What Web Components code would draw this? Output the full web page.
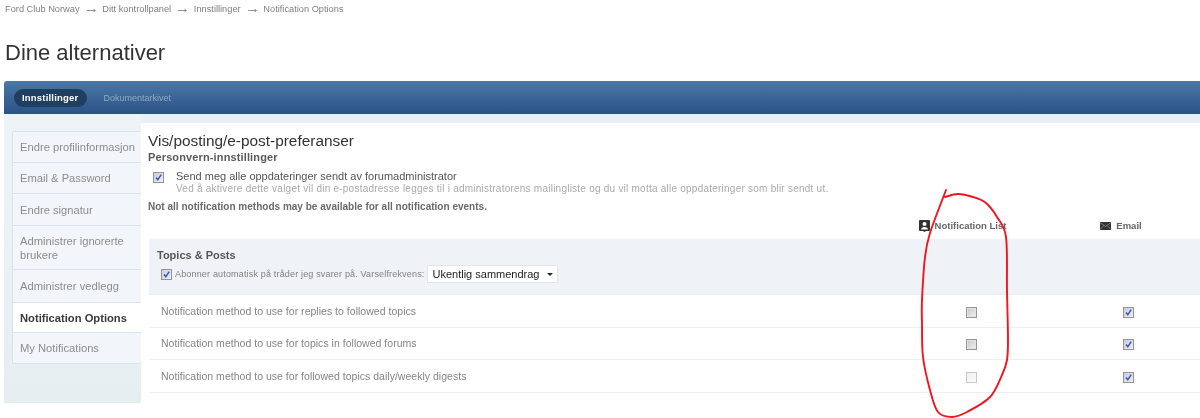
<!DOCTYPE html>
<html lang="no">
<head>
<meta charset="utf-8">
<title>Dine alternativer</title>
<style>
    html, body { margin: 0; padding: 0; background: #fff; }
    /* the reference is a resampled screenshot, so everything is slightly soft */
    body { width: 1200px; height: 418px; overflow: hidden; position: relative; font-family: "Liberation Sans", Arial, sans-serif; color: #555; filter: blur(.35px); }
</style>
</head>
<body>
<forum-breadcrumb>
    <span>Ford Club Norway</span>
    <span>Ditt kontrollpanel</span>
    <span>Innstillinger</span>
    <span>Notification Options</span>
</forum-breadcrumb>
<page-title>Dine alternativer</page-title>
<settings-panel>
    <tab-bar slot="tabs">
        <tab-pill active>Innstillinger</tab-pill>
        <tab-pill>Dokumentarkivet</tab-pill>
    </tab-bar>
    <side-nav slot="nav">
        <side-item h="31">Endre profilinformasjon</side-item>
        <side-item h="31">Email &amp; Password</side-item>
        <side-item h="32">Endre signatur</side-item>
        <side-item h="44">Administrer ignorerte brukere</side-item>
        <side-item h="33">Administrer vedlegg</side-item>
        <side-item h="30" active>Notification Options</side-item>
        <side-item h="31">My Notifications</side-item>
    </side-nav>
    <prefs-form>
        <notify-table>
            <notify-group slot="group"></notify-group>
            <notify-row>Notification method to use for replies to followed topics</notify-row>
            <notify-row>Notification method to use for topics in followed forums</notify-row>
            <notify-row faded>Notification method to use for followed topics daily/weekly digests</notify-row>
        </notify-table>
    </prefs-form>
</settings-panel>
<red-scribble></red-scribble>

<script>
class ForumBreadcrumb extends HTMLElement {
    constructor() {
        super();
        this.attachShadow({ mode: 'open' });
    }

    connectedCallback() {
        this.shadowRoot.innerHTML = `
            <style>
                :host { display: block; height: 19px; padding-left: 5px; font-size: 9.25px; line-height: 19px; color: #808080; }
                nav { display: flex; align-items: center; }
                svg { display: block; flex: none; width: 9px; height: 5px; margin: 1px 6.700px 0 7px; }
                ::slotted(span) { white-space: nowrap; }
            </style>
            <nav></nav>
        `;
        const nav = this.shadowRoot.querySelector('nav');
        [...this.children].forEach((crumb, i) => {
            crumb.slot = 'c' + i;
            if (i > 0) {
                nav.insertAdjacentHTML('beforeend', '<svg viewBox="0 0 9 5"><path d="M0 2.5h8M6.500 1.200l2 1.300-2 1.300" fill="none" stroke="#777" stroke-width=".8"/></svg>');
            }
            nav.insertAdjacentHTML('beforeend', `<slot name="c${i}"></slot>`);
        });
    }
}

class PageTitle extends HTMLElement {
    constructor() {
        super();
        this.attachShadow({ mode: 'open' });
        this.shadowRoot.innerHTML = `
            <style>
                :host { display: block; height: 62px; padding: 22px 0 0 5px; box-sizing: border-box; font-size: 22px; line-height: 24px; color: #333; }
            </style>
            <slot></slot>
        `;
    }
}

class SettingsPanel extends HTMLElement {
    constructor() {
        super();
        this.attachShadow({ mode: 'open' });
        this.shadowRoot.innerHTML = `
            <style>
                :host { display: block; margin-left: 4px; }
                .body { display: flex; align-items: flex-start; background: linear-gradient(#e9f0f5 0, #e9f0f5 9px, #fff 9px); }
                .side { box-sizing: border-box; width: 137px; height: 289px; padding: 18px 0 0 8px; background: linear-gradient(#eef3f7, #e7eef2); flex: none; }
                .main { flex: 1; min-width: 0; padding-top: 9px; }
            </style>
            <slot name="tabs"></slot>
            <div class="body">
                <div class="side"><slot name="nav"></slot></div>
                <div class="main"><slot></slot></div>
            </div>
        `;
    }
}

class TabBar extends HTMLElement {
    constructor() {
        super();
        this.attachShadow({ mode: 'open' });
        this.shadowRoot.innerHTML = `
            <style>
                :host { display: flex; align-items: center; gap: 16px; box-sizing: border-box; height: 33px; padding-left: 10px; border-radius: 3px 0 0 0; background: linear-gradient(#4b78a6, #2b5287); }
            </style>
            <slot></slot>
        `;
    }
}

class TabPill extends HTMLElement {
    constructor() {
        super();
        this.attachShadow({ mode: 'open' });
        this.shadowRoot.innerHTML = `
            <style>
                :host { display: block; font-size: 9px; line-height: 18px; color: #8fa8c4; }
                :host([active]) { padding: 0 9px 0 8px; border-radius: 9px; background: #1f3f60; color: #fff; font-weight: bold; font-size: 9.5px; letter-spacing: .2px; }
            </style>
            <slot></slot>
        `;
    }
}

class SideNav extends HTMLElement {
    constructor() {
        super();
        this.attachShadow({ mode: 'open' });
        this.shadowRoot.innerHTML = `
            <style>
                :host { display: block; border-left: 1px solid #d8e3ef; }
            </style>
            <slot></slot>
        `;
    }
}

class SideItem extends HTMLElement {
    constructor() {
        super();
        this.attachShadow({ mode: 'open' });
        this.shadowRoot.innerHTML = `
            <style>
                :host { display: flex; align-items: center; box-sizing: border-box; padding: 0 0 0 7px; font-size: 11.2px; line-height: 14px; color: #8c8c8c; background: #f2f6fa; border-bottom: 1px solid #d8e3ef; }
                :host(:first-child) { box-shadow: 0 -1px 0 #d8e3ef; }
                :host([active]) { background: #fff; color: #3a3a3a; font-weight: bold; }
                div { max-width: 116px; }
            </style>
            <div><slot></slot></div>
        `;
    }

    connectedCallback() {
        this.style.height = this.getAttribute('h') + 'px';
    }
}

class TickBox extends HTMLElement {
    constructor() {
        super();
        this.attachShadow({ mode: 'open' });
        this.shadowRoot.innerHTML = `
            <style>
                :host { display: inline-block; box-sizing: border-box; flex: none; width: 11px; height: 11px; border: 1px solid #959595; background: linear-gradient(135deg, #c4c4c4, #f4f4f4); box-shadow: inset 0 0 0 1px #e4e4e4; }
                :host([faded]) { border-color: #c8c8c8; background: linear-gradient(135deg, #efefef, #fbfbfb); box-shadow: none; }
                svg { display: none; width: 9px; height: 9px; }
                :host([checked]) { background: linear-gradient(135deg, #c6cde3, #eef0f6); box-shadow: none; }
                :host([checked]) svg { display: block; }
            </style>
            <svg viewBox="0 0 9 9"><path d="M2 4.500l1.800 2.300L7.200 1.600" fill="none" stroke="#3d55a5" stroke-width="1.500"/></svg>
        `;
    }
}

class PrefsForm extends HTMLElement {
    constructor() {
        super();
        this.attachShadow({ mode: 'open' });
        this.shadowRoot.innerHTML = `
            <style>
                :host { display: block; padding: 9px 0 0 7px; }
                h2 { margin: 0; font-size: 15.400px; font-weight: normal; line-height: 18px; color: #333; }
                h3 { margin: 0; font-size: 11px; line-height: 14px; font-weight: bold; color: #5a5a5a; letter-spacing: .13px; }
                .opt { display: flex; gap: 12px; margin: 6px 0 0 5px; }
                .opt tick-box { margin-top: 2px; }
                .label { font-size: 11px; line-height: 12px; color: #555; }
                .hint { font-size: 10px; line-height: 13px; color: #aaa; letter-spacing: .235px; }
                .note { margin-top: 5px; font-size: 10px; line-height: 13px; font-weight: bold; color: #6a6a6a; letter-spacing: .015px; }
            </style>
            <h2>Vis/posting/e-post-preferanser</h2>
            <h3>Personvern-innstillinger</h3>
            <div class="opt">
                <tick-box checked></tick-box>
                <div>
                    <div class="label">Send meg alle oppdateringer sendt av forumadministrator</div>
                    <div class="hint">Ved å aktivere dette valget vil din e-postadresse legges til i administratorens mailingliste og du vil motta alle oppdateringer som blir sendt ut.</div>
                </div>
            </div>
            <div class="note">Not all notification methods may be available for all notification events.</div>
            <slot></slot>
        `;
    }
}

class NotifyTable extends HTMLElement {
    constructor() {
        super();
        this.attachShadow({ mode: 'open' });
        this.shadowRoot.innerHTML = `
            <style>
                :host { display: block; }
                .heads { display: grid; grid-template-columns: 1fr 159px 158px; box-sizing: border-box; height: 26px; padding-bottom: 1px; align-items: center; font-size: 9.500px; font-weight: bold; color: #666; }
                .heads div { display: flex; align-items: center; justify-content: center; gap: 5px; }
                svg { display: block; flex: none; }
            </style>
            <div class="heads">
                <span></span>
                <div>
                    <svg width="11" height="12" viewBox="0 0 11 12"><path d="M1 0h9a1 1 0 0 1 1 1v9a1 1 0 0 1-1 1H7L5.500 12 4 11H1a1 1 0 0 1-1-1V1a1 1 0 0 1 1-1z" fill="#333"/><circle cx="5.500" cy="4" r="2" fill="#fff"/><path d="M2 9.500c.5-2 2-2.600 3.500-2.600S8.500 7.500 9 9.500z" fill="#fff"/></svg>
                    <span>Notification List</span>
                </div>
                <div>
                    <svg width="11" height="8" viewBox="0 0 11 8"><rect width="11" height="8" fill="#333"/><path d="M0 .5l5.500 4 5.500-4M0 7.500l4-4M11 7.500l-4-4" fill="none" stroke="#999" stroke-width=".7"/></svg>
                    <span>Email</span>
                </div>
            </div>
            <slot name="group"></slot>
            <slot></slot>
        `;
    }
}

class NotifyGroup extends HTMLElement {
    constructor() {
        super();
        this.attachShadow({ mode: 'open' });
        this.shadowRoot.innerHTML = `
            <style>
                :host { display: block; box-sizing: border-box; height: 56px; margin-left: 1px; padding: 10px 0 0 8px; background: #eff3f7; border-bottom: 1px solid #e8eef2; }
                h4 { margin: 0; font-size: 11px; line-height: 13px; font-weight: bold; color: #555; }
                .line { display: flex; align-items: center; margin: 3px 0 0 4px; font-size: 9px; letter-spacing: .17px; color: #808080; }
                tick-box { margin-right: 3px; }
                .select { display: flex; align-items: center; justify-content: space-between; box-sizing: border-box; width: 131px; height: 18px; margin-left: 3px; padding: 0 4px 0 4px; background: #fff; border: 1px solid #dfe5ea; font-size: 11px; letter-spacing: 0; color: #222; white-space: nowrap; }
                .select i { width: 0; height: 0; border: 3px solid transparent; border-top: 3px solid #222; border-bottom: 0; }
            </style>
            <h4>Topics &amp; Posts</h4>
            <div class="line">
                <tick-box checked></tick-box>
                <span>Abonner automatisk på tråder jeg svarer på. Varselfrekvens:</span>
                <div class="select"><span>Ukentlig sammendrag</span><i></i></div>
            </div>
        `;
    }
}

class NotifyRow extends HTMLElement {
    constructor() {
        super();
        this.attachShadow({ mode: 'open' });
        this.shadowRoot.innerHTML = `
            <style>
                :host { display: grid; grid-template-columns: 1fr 172px 143px; align-items: center; box-sizing: border-box; height: 32.500px; margin-left: 1px; padding-left: 12px; border-bottom: 1px solid #edf0f3; font-size: 10.500px; letter-spacing: .02px; color: #858585; }
                .cell { display: flex; justify-content: center; padding-top: 3px; }
            </style>
            <div><slot></slot></div>
            <div class="cell a"><tick-box></tick-box></div>
            <div class="cell b"><tick-box checked></tick-box></div>
        `;
    }

    connectedCallback() {
        if (this.hasAttribute('faded')) {
            this.shadowRoot.querySelector('.a tick-box').setAttribute('faded', '');
        }
    }
}

// hand drawn ring round the Notification List column, points read off the screenshot
const RING = [[946,190],[930,233],[925,257],[922,300],[922,323],[923,357],[930,390],[938,412],[952,417],[967,412],[990,397],[1002,375],[1007,360],[1008,340],[1007,290],[1006,237],[997,217],[986,203],[973,197],[958,194],[945,197]];

class RedScribble extends HTMLElement {
    constructor() {
        super();
        this.attachShadow({ mode: 'open' });
        let d = `M${RING[0]}`;
        for (let i = 0; i < RING.length - 1; i++) {
            const p0 = RING[i - 1] || RING[i], p1 = RING[i], p2 = RING[i + 1], p3 = RING[i + 2] || p2;
            const c1 = [p1[0] + (p2[0] - p0[0]) / 6, p1[1] + (p2[1] - p0[1]) / 6];
            const c2 = [p2[0] - (p3[0] - p1[0]) / 6, p2[1] - (p3[1] - p1[1]) / 6];
            d += `C${c1} ${c2} ${p2}`;
        }
        this.shadowRoot.innerHTML = `
            <style>
                :host { display: block; position: absolute; left: 0; top: 0; width: 1200px; height: 418px; pointer-events: none; }
                svg { display: block; }
            </style>
            <svg width="1200" height="418" viewBox="0 0 1200 418">
                <path d="${d}" fill="none" stroke="#f4141e" stroke-width="1.900" stroke-linejoin="round" stroke-linecap="round"/>
            </svg>
        `;
    }
}

customElements.define('forum-breadcrumb', ForumBreadcrumb);
customElements.define('page-title', PageTitle);
customElements.define('settings-panel', SettingsPanel);
customElements.define('tab-bar', TabBar);
customElements.define('tab-pill', TabPill);
customElements.define('side-nav', SideNav);
customElements.define('side-item', SideItem);
customElements.define('tick-box', TickBox);
customElements.define('prefs-form', PrefsForm);
customElements.define('notify-table', NotifyTable);
customElements.define('notify-group', NotifyGroup);
customElements.define('notify-row', NotifyRow);
customElements.define('red-scribble', RedScribble);
</script>
</body>
</html>
